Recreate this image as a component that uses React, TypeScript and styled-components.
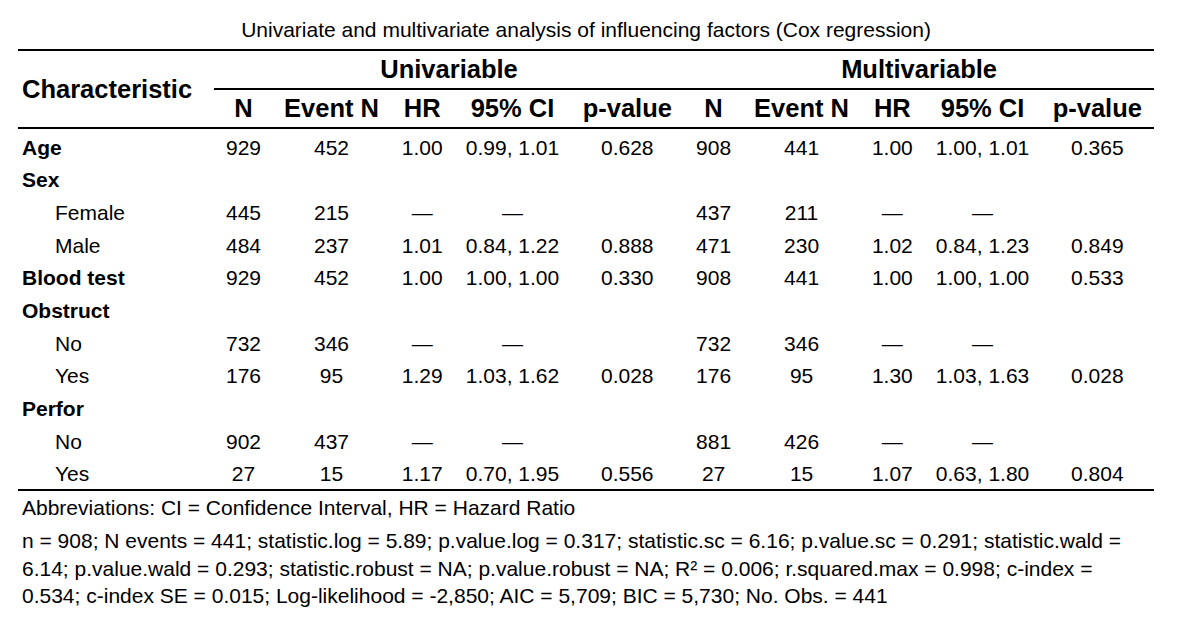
import React from "react";
import styled, { createGlobalStyle } from "styled-components";

const GlobalStyle = createGlobalStyle`
  html, body {
    margin: 0;
    padding: 0;
    background: #ffffff;
  }
  body {
    font-family: "Liberation Sans", Arial, sans-serif;
    color: #000000;
  }
`;

const Page = styled.div`
  width: 1136px;
  padding: 0 0 0 18px;
`;

const Table = styled.table`
  width: 1136px;
  border-collapse: collapse;
  table-layout: fixed;
  font-size: 21px;
`;

const Caption = styled.caption`
  caption-side: top;
  text-align: center;
  font-size: 21px;
  line-height: 24px;
  padding: 18px 0 7px;
`;

const HeadRow = styled.tr<{ $top?: boolean; $bottom?: boolean }>`
  border-top: ${(p) => (p.$top ? "2px solid #000" : "none")};
  border-bottom: ${(p) => (p.$bottom ? "2px solid #000" : "none")};
`;

const Th = styled.th<{ $align?: "left" | "center" }>`
  font-size: 25.5px;
  font-weight: 700;
  line-height: 29px;
  padding: 4px ${(p) => (p.$align === "left" ? "4px" : "0")};
  text-align: ${(p) => p.$align ?? "center"};
  vertical-align: middle;
  white-space: nowrap;
`;

const SpannerTh = styled(Th)`
  border-bottom: 2px solid #000;
`;

const BodyRow = styled.tr<{ $last?: boolean }>`
  border-bottom: ${(p) => (p.$last ? "2px solid #000" : "none")};
`;

const Td = styled.td`
  height: 32.7px;
  box-sizing: border-box;
  padding: 6.6px 0 2.1px;
  line-height: 24px;
  text-align: center;
  vertical-align: middle;
  white-space: nowrap;
`;

const LabelTd = styled(Td)<{ $level: 0 | 1 }>`
  text-align: left;
  font-weight: ${(p) => (p.$level === 0 ? 700 : 400)};
  padding-left: ${(p) => (p.$level === 0 ? "4px" : "37px")};
`;

const Footnotes = styled.div`
  width: 1136px;
`;

const Footnote = styled.p`
  margin: 0;
  padding: 3px 4px;
  font-size: 21px;
  line-height: 27.5px;
`;

type Row = {
  label: string;
  level: 0 | 1;
  values: string[];
};

const D = "\u2014";

const rows: Row[] = [
  { label: "Age", level: 0, values: ["929", "452", "1.00", "0.99, 1.01", "0.628", "908", "441", "1.00", "1.00, 1.01", "0.365"] },
  { label: "Sex", level: 0, values: ["", "", "", "", "", "", "", "", "", ""] },
  { label: "Female", level: 1, values: ["445", "215", D, D, "", "437", "211", D, D, ""] },
  { label: "Male", level: 1, values: ["484", "237", "1.01", "0.84, 1.22", "0.888", "471", "230", "1.02", "0.84, 1.23", "0.849"] },
  { label: "Blood test", level: 0, values: ["929", "452", "1.00", "1.00, 1.00", "0.330", "908", "441", "1.00", "1.00, 1.00", "0.533"] },
  { label: "Obstruct", level: 0, values: ["", "", "", "", "", "", "", "", "", ""] },
  { label: "No", level: 1, values: ["732", "346", D, D, "", "732", "346", D, D, ""] },
  { label: "Yes", level: 1, values: ["176", "95", "1.29", "1.03, 1.62", "0.028", "176", "95", "1.30", "1.03, 1.63", "0.028"] },
  { label: "Perfor", level: 0, values: ["", "", "", "", "", "", "", "", "", ""] },
  { label: "No", level: 1, values: ["902", "437", D, D, "", "881", "426", D, D, ""] },
  { label: "Yes", level: 1, values: ["27", "15", "1.17", "0.70, 1.95", "0.556", "27", "15", "1.07", "0.63, 1.80", "0.804"] },
];

const groupCols = [59, 117, 64.5, 116, 113.5];
const colHeads = ["N", "Event N", "HR", "95% CI", "p-value"];

export default function App() {
  return (
    <>
      <GlobalStyle />
      <Page>
        <Table>
          <Caption>
            Univariate and multivariate analysis of influencing factors (Cox regression)
          </Caption>
          <colgroup>
            <col style={{ width: 196 }} />
            {[...groupCols, ...groupCols].map((w, i) => (
              <col key={i} style={{ width: w }} />
            ))}
          </colgroup>
          <thead>
            <HeadRow $top>
              <Th $align="left" rowSpan={2}>
                Characteristic
              </Th>
              <SpannerTh colSpan={5}>Univariable</SpannerTh>
              <SpannerTh colSpan={5}>Multivariable</SpannerTh>
            </HeadRow>
            <HeadRow $bottom>
              {[...colHeads, ...colHeads].map((h, i) => (
                <Th key={i}>{h}</Th>
              ))}
            </HeadRow>
          </thead>
          <tbody>
            {rows.map((r, i) => (
              <BodyRow key={i} $last={i === rows.length - 1}>
                <LabelTd $level={r.level}>{r.label}</LabelTd>
                {r.values.map((v, j) => (
                  <Td key={j}>{v}</Td>
                ))}
              </BodyRow>
            ))}
          </tbody>
        </Table>
        <Footnotes>
          <Footnote>Abbreviations: CI = Confidence Interval, HR = Hazard Ratio</Footnote>
          <Footnote>
            n = 908; N events = 441; statistic.log = 5.89; p.value.log = 0.317; statistic.sc = 6.16;
            p.value.sc = 0.291; statistic.wald = 6.14; p.value.wald = 0.293; statistic.robust = NA;
            p.value.robust = NA; R² = 0.006; r.squared.max = 0.998; c-index = 0.534; c-index SE =
            0.015; Log-likelihood = -2,850; AIC = 5,709; BIC = 5,730; No. Obs. = 441
          </Footnote>
        </Footnotes>
      </Page>
    </>
  );
}
